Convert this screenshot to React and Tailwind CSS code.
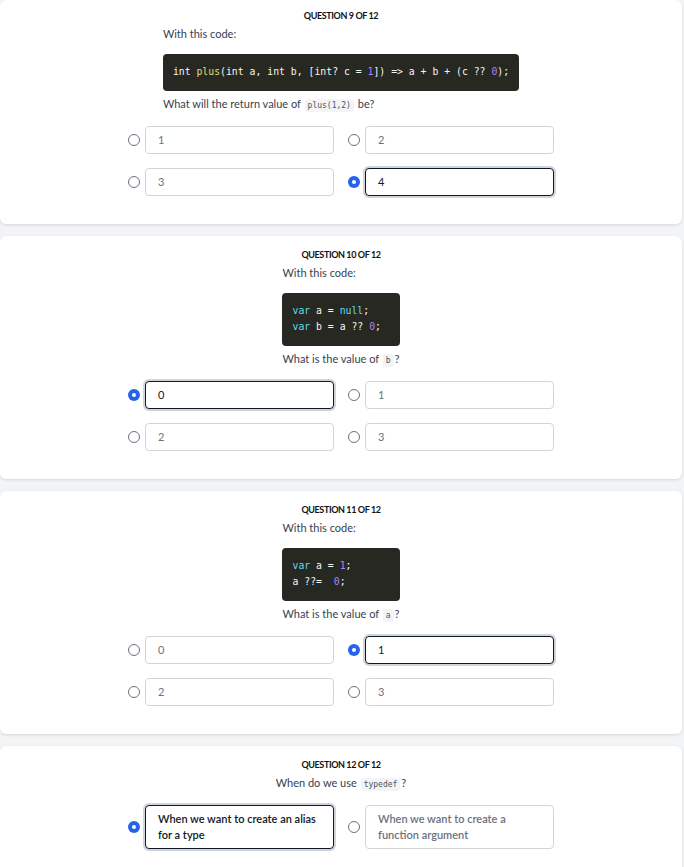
import React from 'react';

const questions = [
  {
    n: 9,
    code: [
      [
        ['int ', 'w'],
        ['plus', 'y'],
        ['(int a, int b, [int? c = ', 'w'],
        ['1', 'p'],
        [']) => a + b + (c ?? ', 'w'],
        ['0', 'p'],
        [');', 'w'],
      ],
    ],
    prompt: ['What will the return value of ', 'plus(1,2)', ' be?'],
    options: ['1', '2', '3', '4'],
    selected: 3,
  },
  {
    n: 10,
    code: [
      [
        ['var ', 'c'],
        ['a = ', 'w'],
        ['null', 'c'],
        [';', 'w'],
      ],
      [
        ['var ', 'c'],
        ['b = a ?? ', 'w'],
        ['0', 'p'],
        [';', 'w'],
      ],
    ],
    prompt: ['What is the value of ', 'b', '?'],
    options: ['0', '1', '2', '3'],
    selected: 0,
  },
  {
    n: 11,
    code: [
      [
        ['var ', 'c'],
        ['a = ', 'w'],
        ['1', 'p'],
        [';', 'w'],
      ],
      [
        ['a ??=  ', 'w'],
        ['0', 'p'],
        [';', 'w'],
      ],
    ],
    prompt: ['What is the value of ', 'a', '?'],
    options: ['0', '1', '2', '3'],
    selected: 1,
  },
];

const tokenColor = {
  w: 'text-[#f8f8f2]',
  y: 'text-[#e6db74]',
  p: 'text-[#ae81ff]',
  c: 'text-[#66d9ef]',
};

const mono = { fontFamily: '"DejaVu Sans Mono", "Liberation Mono", monospace' };

function Radio({ checked }) {
  return checked ? (
    <span className="w-[12px] h-[12px] shrink-0 rounded-full bg-[#2563eb] flex items-center justify-center">
      <span className="w-[4px] h-[4px] rounded-full bg-white" />
    </span>
  ) : (
    <span className="w-[12px] h-[12px] shrink-0 rounded-full border border-[#6b7280] bg-white" />
  );
}

function Option({ label, checked, tall }) {
  return (
    <div className="flex items-center gap-[5px]">
      <Radio checked={checked} />
      <div
        className={`flex-1 flex items-center rounded-[4px] border bg-white px-[12px] ${
          tall ? 'h-[44px] font-semibold leading-[16px]' : 'h-[28px]'
        } ${
          checked
            ? 'border-[#111827] text-[#111827] ring-2 ring-[#d1d5db]'
            : 'border-[#d1d5db] text-[#6b7280]'
        }`}
      >
        {label}
      </div>
    </div>
  );
}

function InlineCode({ children }) {
  return (
    <code
      style={mono}
      className="mx-[1px] rounded-[3px] bg-[#f3f4f6] px-[3px] py-[2px] text-[8px] leading-none text-[#4b5563]"
    >
      {children}
    </code>
  );
}

function Card({ n, children, first }) {
  return (
    <div
      className={`mr-[2px] rounded-[6px] bg-white shadow-[0_1px_3px_rgba(0,0,0,0.12)] ${
        first ? 'pt-[10px]' : 'pt-[13px]'
      } pb-[28px]`}
    >
      <div className="text-center text-[9px] font-bold leading-[12px] text-[#111] tracking-[-0.4px]">
        QUESTION {n} OF 12
      </div>
      {children}
    </div>
  );
}

function CodeQuestion({ q, first }) {
  return (
    <Card n={q.n} first={first}>
      <div className="flex justify-center">
        <div className="mt-[4px]">
          <div className="leading-[16px] text-[#374151]">With this code:</div>
          <div
            style={mono}
            className="mt-[12px] rounded-[4px] bg-[#272822] px-[10px] pt-[10px] pb-[11px] text-[9.8px] leading-[16px] whitespace-pre"
          >
            {q.code.map((line, i) => (
              <div key={i}>
                {line.map(([t, c], j) => (
                  <span key={j} className={tokenColor[c]}>
                    {t}
                  </span>
                ))}
              </div>
            ))}
          </div>
          <div className="mt-[5px] leading-[16px] text-[#374151]">
            {q.prompt[0]}
            <InlineCode>{q.prompt[1]}</InlineCode>
            {q.prompt[2]}
          </div>
        </div>
      </div>
      <div className="mx-auto mt-[14px] grid w-[426px] grid-cols-2 gap-x-[14px] gap-y-[14px]">
        {q.options.map((o, i) => (
          <Option key={i} label={o} checked={q.selected === i} />
        ))}
      </div>
    </Card>
  );
}

export default function App() {
  return (
    <div
      className="min-h-screen bg-[#f3f4f6] text-[11px] overflow-hidden"
      style={{ fontFamily: 'Lato, "Noto Sans", sans-serif' }}
    >
      <div className="flex flex-col gap-[12px] h-[867px]">
        {questions.map((q, i) => (
          <CodeQuestion key={q.n} q={q} first={i === 0} />
        ))}
        <Card n={12}>
          <div className="mt-[4px] text-center leading-[16px] text-[#374151]">
            When do we use <InlineCode>typedef</InlineCode>?
          </div>
          <div className="mx-auto mt-[14px] grid w-[426px] grid-cols-2 gap-x-[14px]">
            <Option label="When we want to create an alias for a type" checked tall />
            <Option label="When we want to create a function argument" tall />
          </div>
        </Card>
      </div>
    </div>
  );
}
